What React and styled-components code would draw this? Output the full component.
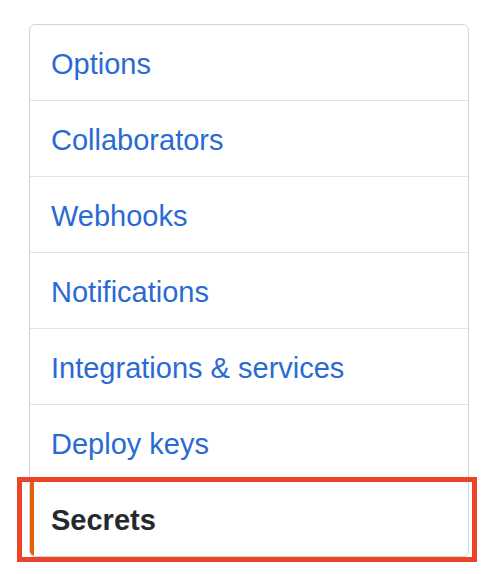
import React from 'react'
import styled, { createGlobalStyle } from 'styled-components'

const GlobalStyle = createGlobalStyle`
  body {
    margin: 0;
    background: #ffffff;
    font-family: 'Liberation Sans', Arial, sans-serif;
  }
`

const Page = styled.div`
  position: relative;
  width: 492px;
  height: 574px;
  padding: 24px 0 0 29px;
  box-sizing: border-box;
`

const Menu = styled.nav`
  width: 440px;
  border: 1px solid #d1d5da;
  border-radius: 6px;
  overflow: hidden;
  box-sizing: border-box;
  display: flex;
  flex-direction: column;
`

const Item = styled.a`
  display: flex;
  align-items: center;
  height: 71px;
  padding-top: 4px;
  padding-left: ${(p) => (p.$active ? '17px' : '21px')};
  margin-left: ${(p) => (p.$active ? '-1px' : '0')};
  border-left: ${(p) => (p.$active ? '5px solid #e36209' : 'none')};
  border-bottom: 1px solid #e1e4e8;
  font-size: 29px;
  font-weight: ${(p) => (p.$active ? 700 : 400)};
  color: ${(p) => (p.$active ? '#24292e' : '#2a6ad3')};
  text-decoration: none;
  cursor: pointer;

  &:last-child {
    border-bottom: none;
  }
`

const Highlight = styled.div`
  position: absolute;
  left: 17px;
  top: 477px;
  width: 460px;
  height: 85px;
  border: 5px solid #ea4429;
  box-sizing: border-box;
  pointer-events: none;
`

const items = [
  'Options',
  'Collaborators',
  'Webhooks',
  'Notifications',
  'Integrations & services',
  'Deploy keys',
  'Secrets',
]

const App = () => {
  return (
    <Page>
      <GlobalStyle />
      <Menu>
        {items.map((label) => (
          <Item key={label} $active={label === 'Secrets'}>
            {label}
          </Item>
        ))}
      </Menu>
      <Highlight />
    </Page>
  )
}

export default App
